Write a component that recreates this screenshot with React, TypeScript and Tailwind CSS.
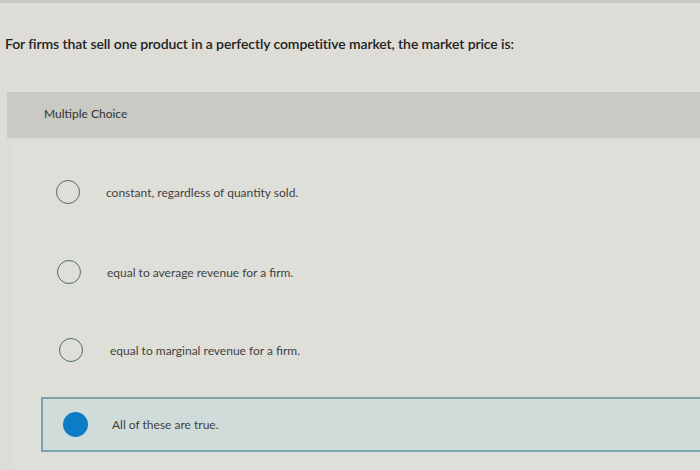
import React from 'react';

const options = [
  { text: 'constant, regardless of quantity sold.', mt: 'mt-[42px]', ml: 'ml-[43px]', gap: 'ml-[26px]' },
  { text: 'equal to average revenue for a firm.', mt: 'mt-[56px]', ml: 'ml-[44px]', gap: 'ml-[26px]' },
  { text: 'equal to marginal revenue for a firm.', mt: 'mt-[54px]', ml: 'ml-[46px]', gap: 'ml-[27px]' },
];

export default function App() {
  return (
    <div
      className="w-[700px] h-[470px] overflow-hidden bg-[#dddcd7] flex flex-col border-t-[3px] border-[#c9c8c2]"
      style={{ fontFamily: 'Lato, "Open Sans", sans-serif' }}
    >
      {/* Question */}
      <div className="shrink-0 h-[89px] pl-[5px] pt-[30px]">
        <p className="text-[14px] font-semibold text-[#222] tracking-[-0.1px]">
          For firms that sell one product in a perfectly competitive market, the market price is:
        </p>
      </div>

      {/* Multiple choice header */}
      <div className="shrink-0 ml-[7px] h-[46px] bg-[#c9cac4] pl-[37px] flex items-center pb-[2px]">
        <span className="text-[12px] text-[#333]">Multiple Choice</span>
      </div>

      {/* Options */}
      <div className="ml-[13px] flex-1 bg-[#dfdfda] flex flex-col">
        {options.map((o) => (
          <div key={o.text} className={`${o.mt} h-[24px] flex items-center`}>
            <span className={`${o.ml} shrink-0 w-[24px] h-[24px] rounded-full border-[1.5px] border-[#4f6b69]`} />
            <span className={`${o.gap} mt-[2px] text-[12px] text-[#3f3f3f]`}>{o.text}</span>
          </div>
        ))}
        <div className="shrink-0 ml-[28px] mt-[35px] h-[55px] flex items-center border-2 border-r-0 border-[#7ea2aa] bg-[#d0dcda]">
          <span className="ml-[20px] w-[25px] h-[25px] rounded-full bg-[#0b7cc5]" />
          <span className="ml-[24px] text-[12px] text-[#3f3f3f]">All of these are true.</span>
        </div>
      </div>
    </div>
  );
}
